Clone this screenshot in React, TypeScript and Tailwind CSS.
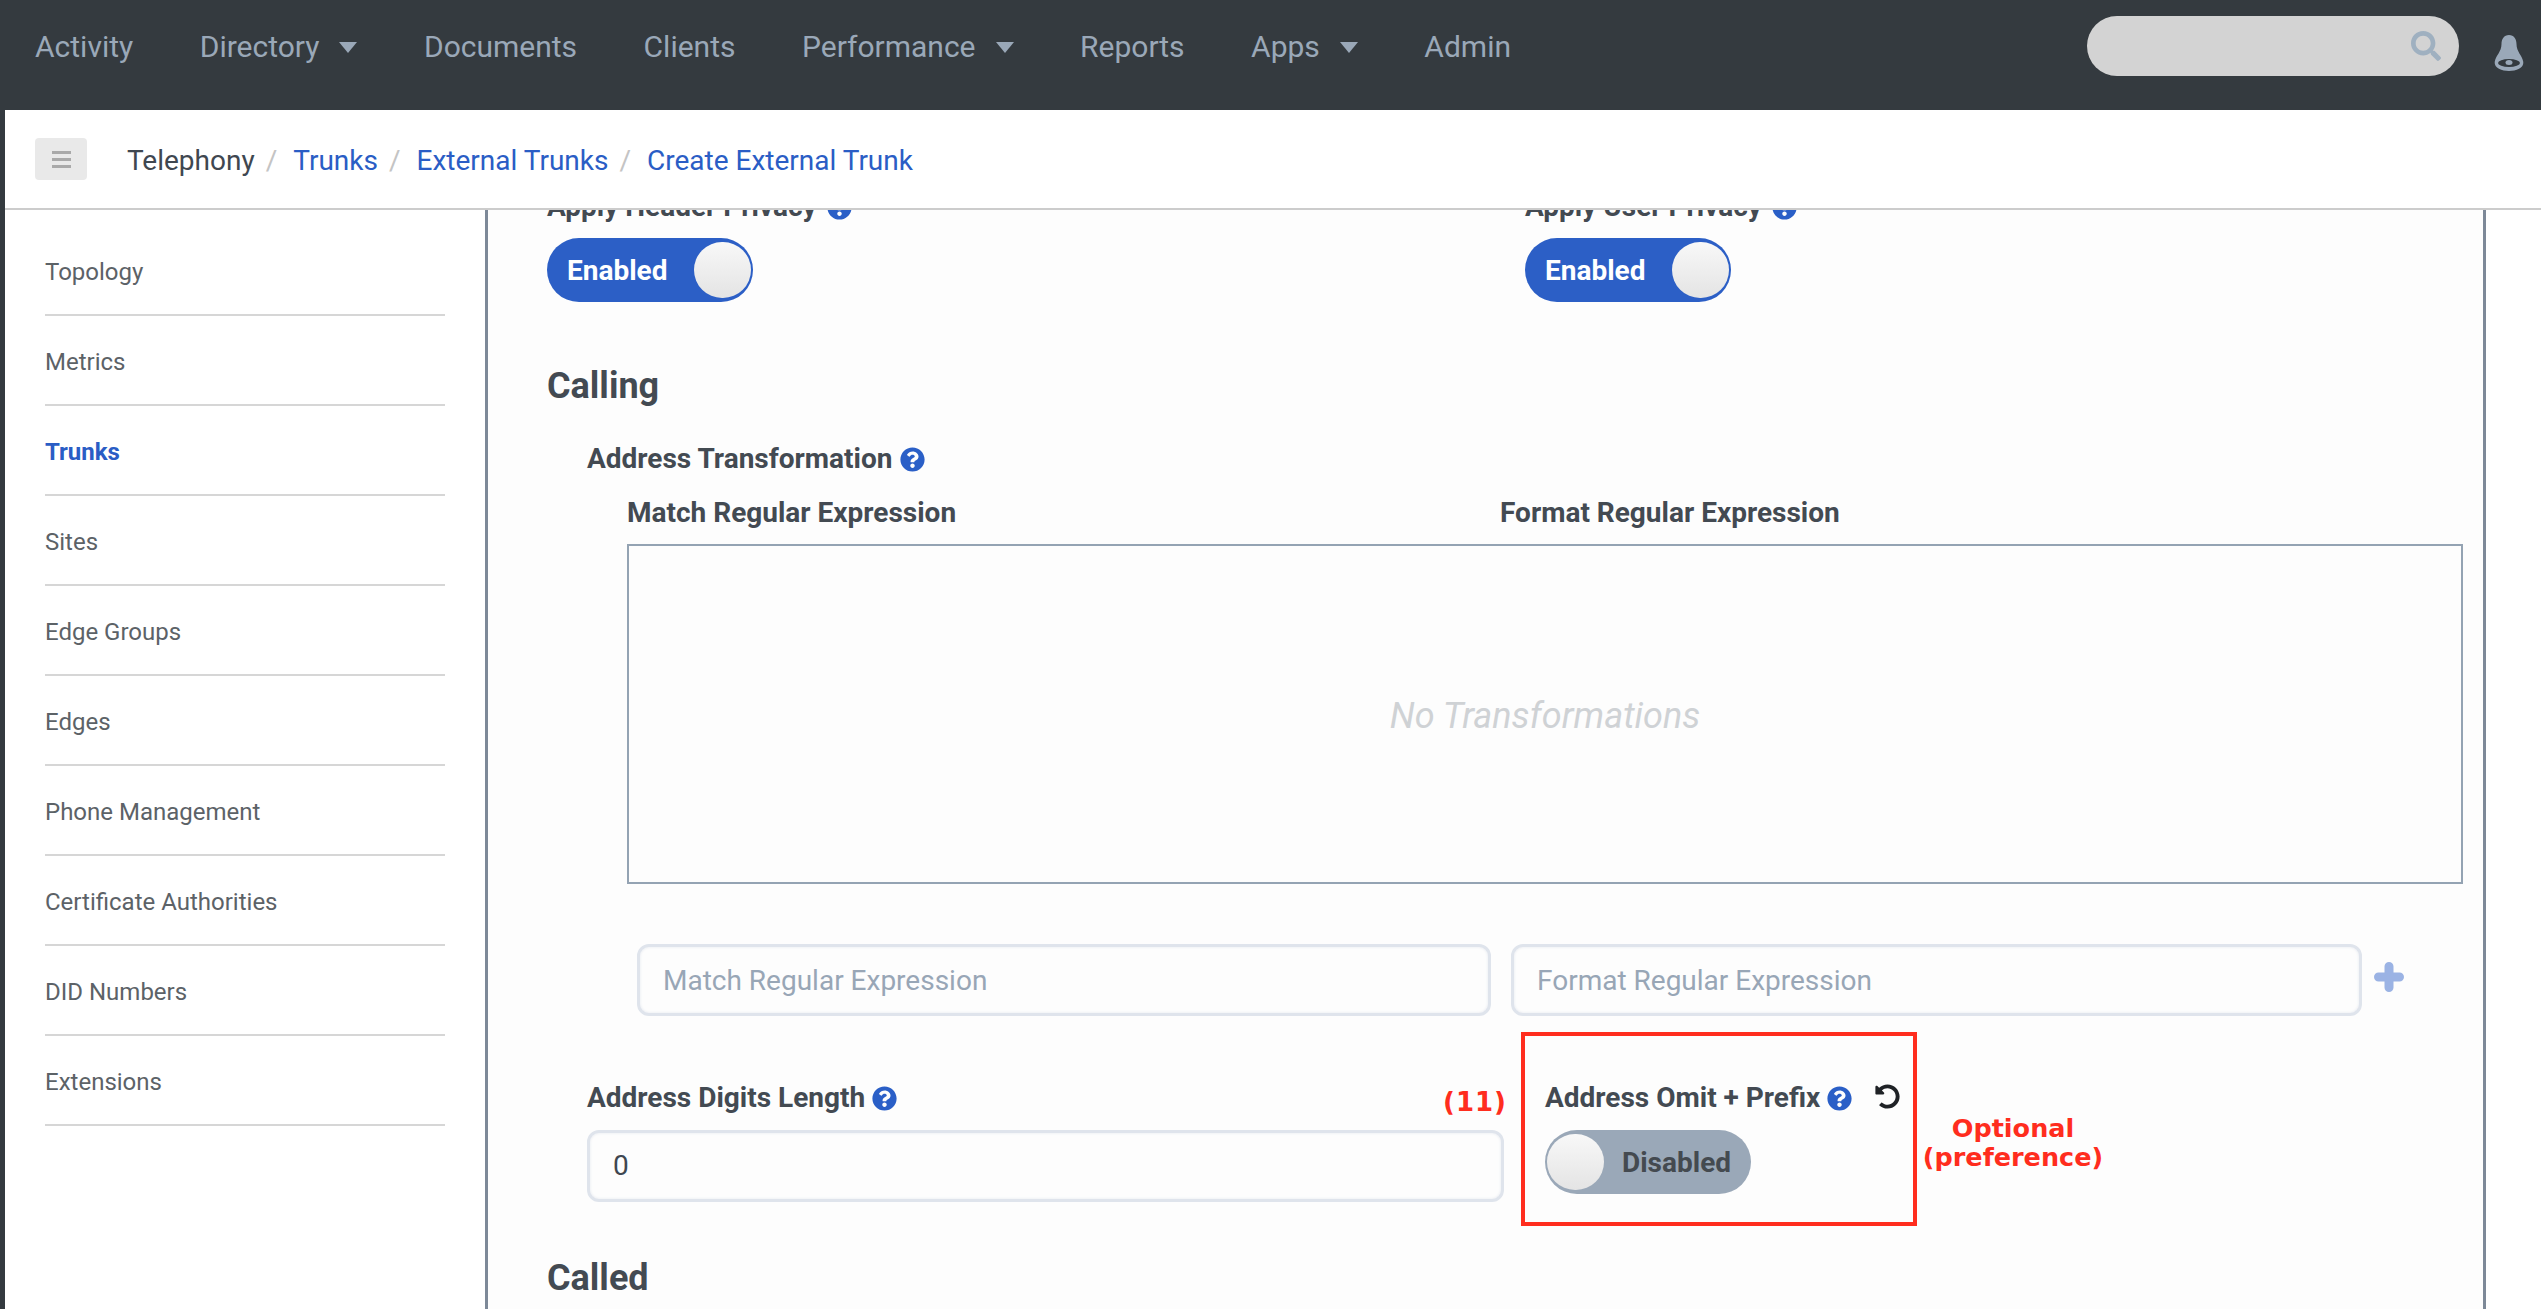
import { FaQuestionCircle, FaSearch, FaUndoAlt } from "react-icons/fa";

const NAV_ITEMS = [
  { label: "Activity" },
  { label: "Directory", caret: true },
  { label: "Documents" },
  { label: "Clients" },
  { label: "Performance", caret: true },
  { label: "Reports" },
  { label: "Apps", caret: true },
  { label: "Admin" },
];

const SIDE_ITEMS = [
  "Topology",
  "Metrics",
  "Trunks",
  "Sites",
  "Edge Groups",
  "Edges",
  "Phone Management",
  "Certificate Authorities",
  "DID Numbers",
  "Extensions",
];

const Help = ({ className = "" }: { className?: string }) => (
  <FaQuestionCircle className={`text-[#2a5fc7] text-[25px] shrink-0 ${className}`} />
);

const Knob = () => (
  <span className="block w-[57px] h-[56px] rounded-full bg-gradient-to-b from-[#f8f8f8] to-[#e4e4e4]" />
);

const Toggle = ({ enabled }: { enabled: boolean }) =>
  enabled ? (
    <div className="w-[206px] h-[64px] rounded-full bg-[#2c5fc6] flex items-center justify-between pl-[20px] pr-[2px]">
      <span className="text-white font-bold text-[28px] leading-none pt-[2px]">Enabled</span>
      <Knob />
    </div>
  ) : (
    <div className="w-[206px] h-[64px] rounded-full bg-[#9aa8b8] flex items-center pl-[2px] gap-[18px]">
      <Knob />
      <span className="text-[#444a50] font-bold text-[28px] leading-none pt-[1px]">Disabled</span>
    </div>
  );

const Field = ({ placeholder, value, className = "" }: { placeholder?: string; value?: string; className?: string }) => (
  <div
    className={`h-[72px] rounded-[12px] border-[3px] border-[#dfe4ec] bg-[#fdfdfd] shadow-[inset_0_0_3px_#e3e7ee] flex items-center px-[23px] text-[28px] ${
      value ? "text-[#3f4750]" : "text-[#98a6b6]"
    } ${className}`}
  >
    {value ?? placeholder}
  </div>
);

const Slash = () => <span className="text-[#c4c4c4] ml-[11px] mr-[16px]">/</span>;

export default function App() {
  return (
    <div className="h-[1309px] w-[2541px] overflow-hidden flex flex-col bg-[#343a3f] font-['Roboto',sans-serif] text-[#434a52]">
      <header className="h-[110px] shrink-0 flex items-center pl-[35px] pr-[17px] pb-[18px] bg-[#343a3f]">
        <nav className="flex items-center gap-[66.5px] text-[30px] text-[#9aa8b8]">
          {NAV_ITEMS.map((item) => (
            <div key={item.label} className="flex items-center gap-[20px]">
              <span>{item.label}</span>
              {item.caret && (
                <svg width="18" height="11" viewBox="0 0 18 11" className="mt-[3px]">
                  <path d="M0 0h18L9 11z" fill="#9aa8b8" />
                </svg>
              )}
            </div>
          ))}
        </nav>
        <div className="ml-auto w-[372px] h-[60px] rounded-full bg-[#d3d3d3] flex items-center justify-end pr-[18px]">
          <FaSearch className="text-[#9fb0c0] text-[30px]" />
        </div>
        <svg width="30" height="36" viewBox="0 0 30 36" className="ml-[35px] mt-[13px]">
          <path
            d="M15 0C10 0 7.500 4 7.500 9 7.500 17 2 20 .7 27 0 33 8 36 15 36s15-3 14.300-9C28 20 22.500 17 22.500 9 22.500 4 20 0 15 0z"
            fill="#9aa8b8"
          />
          <ellipse cx="15" cy="28" rx="11" ry="4" fill="#343a3f" />
          <ellipse cx="15" cy="27.500" rx="3.500" ry="2.500" fill="#9aa8b8" />
        </svg>
      </header>

      <div className="flex-1 min-h-0 ml-[5px] bg-white flex flex-col">
        <div className="h-[100px] shrink-0 border-b-2 border-[#cccccc] flex items-center pl-[30px] bg-white relative z-10">
          <div className="w-[52px] h-[42px] rounded-[4px] bg-[#e9e9e9] flex flex-col items-center justify-center gap-[4px] mr-[40px]">
            <span className="block w-[19px] h-[3px] bg-[#a9a9a9]" />
            <span className="block w-[19px] h-[3px] bg-[#a9a9a9]" />
            <span className="block w-[19px] h-[3px] bg-[#a9a9a9]" />
          </div>
          <div className="flex items-center text-[28px] text-[#2a5dc5] mt-[3px]">
            <span className="text-[#3f4750]">Telephony</span>
            <Slash />
            <span>Trunks</span>
            <Slash />
            <span>External Trunks</span>
            <Slash />
            <span>Create External Trunk</span>
          </div>
        </div>

        <div className="flex-1 min-h-0 flex">
          <aside className="w-[480px] shrink-0 pl-[40px] pr-[40px] pt-[16px]">
            {SIDE_ITEMS.map((item) => (
              <div
                key={item}
                className={`h-[90px] border-b-2 border-[#d6d6d6] flex items-center pt-[3px] text-[24px] ${
                  item === "Trunks" ? "font-bold text-[#2a5dc5]" : "text-[#5c6267]"
                }`}
              >
                {item}
              </div>
            ))}
          </aside>

          <main className="w-[2001px] shrink-0 border-x-[3px] border-[#7d8998] bg-[#fdfdfd] pl-[59px] overflow-hidden">
            <div className="-mt-[23px] grid grid-cols-[978px_1fr]">
              <div>
                <div className="flex items-center gap-[10px] h-[40px] text-[28px] font-bold">
                  Apply Header Privacy <Help />
                </div>
                <div className="mt-[11px]">
                  <Toggle enabled />
                </div>
              </div>
              <div>
                <div className="flex items-center gap-[10px] h-[40px] text-[28px] font-bold">
                  Apply User Privacy <Help />
                </div>
                <div className="mt-[11px]">
                  <Toggle enabled />
                </div>
              </div>
            </div>

            <h2 className="mt-[63px] h-[42px] flex items-center text-[36px] font-bold">Calling</h2>

            <div className="pl-[40px]">
              <div className="mt-[32px] h-[40px] flex items-center gap-[8px] text-[28px] font-bold">
                Address Transformation <Help />
              </div>

              <div className="pl-[40px] pr-[20px]">
                <div className="mt-[13px] h-[40px] grid grid-cols-[873px_1fr] items-center text-[28px] font-bold">
                  <span>Match Regular Expression</span>
                  <span>Format Regular Expression</span>
                </div>
                <div className="mt-[12px] h-[340px] border-2 border-[#94a3b3] flex items-center justify-center pt-[3px] text-[36px] italic text-[#cfd2d5]">
                  No Transformations
                </div>

                <div className="mt-[60px] pl-[10px] flex items-center">
                  <Field placeholder="Match Regular Expression" className="w-[854px] pt-[1px]" />
                  <Field placeholder="Format Regular Expression" className="w-[851px] ml-[20px] pt-[1px]" />
                  <svg width="30" height="30" viewBox="0 0 30 30" className="ml-[12px] -mt-[6px]" stroke="#9bb3e4" strokeWidth="9" strokeLinecap="round">
                    <path d="M15 4.500v21M4.500 15h21" />
                  </svg>
                </div>
              </div>

              <div className="mt-[62px] flex">
                <div className="w-[917px] shrink-0 relative">
                  <div className="h-[40px] flex items-center gap-[7px] text-[28px] font-bold">
                    Address Digits Length <Help />
                  </div>
                  <span className="absolute right-[-3px] top-[5px] font-['DejaVu_Sans',sans-serif] font-bold text-[26px] tracking-[1px] text-[#ff2d1e]">
                    (11)
                  </span>
                  <Field value="0" className="mt-[12px]" />
                </div>
                <div className="ml-[41px] relative">
                  <div className="absolute left-[-24px] top-[-46px] w-[396px] h-[194px] border-[4px] border-[#ff2d1e]" />
                  <div className="h-[40px] flex items-center gap-[7px] text-[28px] font-bold whitespace-nowrap">
                    Address Omit + Prefix <Help />
                    <FaUndoAlt className="ml-[16px] -mt-[3px] text-[25px] text-[#1f2226]" />
                  </div>
                  <div className="mt-[12px]">
                    <Toggle enabled={false} />
                  </div>
                  <div className="absolute left-[373px] top-[36px] w-[190px] text-center font-['DejaVu_Sans',sans-serif] font-bold text-[25.5px] leading-[29px] text-[#ff2d1e] whitespace-nowrap">
                    Optional
                    <br />
                    (preference)
                  </div>
                </div>
              </div>
            </div>

            <h2 className="mt-[55px] h-[42px] flex items-center text-[36px] font-bold">Called</h2>
          </main>
        </div>
      </div>
    </div>
  );
}
